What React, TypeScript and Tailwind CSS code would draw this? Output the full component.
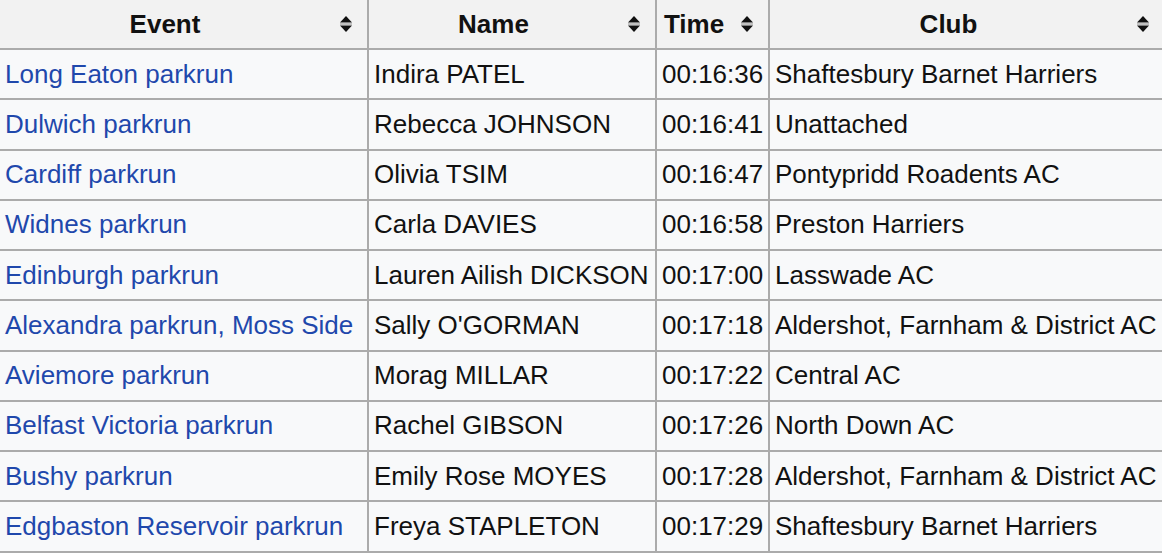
import React from "react";

type Row = { event: string; name: string; time: string; club: string };

const rows: Row[] = [
  { event: "Long Eaton parkrun", name: "Indira PATEL", time: "00:16:36", club: "Shaftesbury Barnet Harriers" },
  { event: "Dulwich parkrun", name: "Rebecca JOHNSON", time: "00:16:41", club: "Unattached" },
  { event: "Cardiff parkrun", name: "Olivia TSIM", time: "00:16:47", club: "Pontypridd Roadents AC" },
  { event: "Widnes parkrun", name: "Carla DAVIES", time: "00:16:58", club: "Preston Harriers" },
  { event: "Edinburgh parkrun", name: "Lauren Ailish DICKSON", time: "00:17:00", club: "Lasswade AC" },
  { event: "Alexandra parkrun, Moss Side", name: "Sally O'GORMAN", time: "00:17:18", club: "Aldershot, Farnham & District AC" },
  { event: "Aviemore parkrun", name: "Morag MILLAR", time: "00:17:22", club: "Central AC" },
  { event: "Belfast Victoria parkrun", name: "Rachel GIBSON", time: "00:17:26", club: "North Down AC" },
  { event: "Bushy parkrun", name: "Emily Rose MOYES", time: "00:17:28", club: "Aldershot, Farnham & District AC" },
  { event: "Edgbaston Reservoir parkrun", name: "Freya STAPLETON", time: "00:17:29", club: "Shaftesbury Barnet Harriers" },
];

function SortIcon() {
  return (
    <svg width="14" height="20" viewBox="0 0 14 20" className="shrink-0">
      <path d="M7 2 L13 8.6 L1 8.6 Z" fill="#111" />
      <rect x="1" y="9.2" width="12" height="1.6" fill="#b5b5b5" />
      <path d="M1 11.4 L13 11.4 L7 18 Z" fill="#111" />
    </svg>
  );
}

function Th({ label, first, last }: { label: string; first?: boolean; last?: boolean }) {
  return (
    <th
      className={`h-[49px] border-2 border-t-0 border-[#ababab] bg-[#f2f2f2] p-0 font-bold ${first ? "border-l-0" : ""} ${last ? "border-r-0" : ""}`}
    >
      <div className="flex items-center pl-[6px] pr-[14px]">
        <span className="flex-1 text-center pr-[15px]">{label}</span>
        <SortIcon />
      </div>
    </th>
  );
}

export default function App() {
  return (
    <div className="w-[1162px] h-[554px] overflow-hidden bg-white">
      <table
        className="w-[1164px] table-fixed border-collapse text-[26px] leading-[39px] text-[#111]"
        style={{ fontFamily: '"Liberation Sans", Arial, sans-serif' }}
      >
        <colgroup>
          <col className="w-[368px]" />
          <col className="w-[288px]" />
          <col className="w-[113px]" />
          <col className="w-[395px]" />
        </colgroup>
        <thead>
          <tr>
            <Th label="Event" first />
            <Th label="Name" />
            <Th label="Time" />
            <Th label="Club" last />
          </tr>
        </thead>
        <tbody>
          {rows.map((r) => (
            <tr key={r.event} className="h-[50.25px] bg-[#f8f9fa]">
              <td className="border-2 border-l-0 border-[#ababab] px-[5px] py-0 whitespace-nowrap text-[#1f48ac]">
                {r.event}
              </td>
              <td className="border-2 border-[#ababab] px-[5px] py-0 whitespace-nowrap">{r.name}</td>
              <td className="border-2 border-[#ababab] px-[5px] py-0 whitespace-nowrap">{r.time}</td>
              <td className="border-2 border-r-0 border-[#ababab] px-[5px] py-0 whitespace-nowrap">{r.club}</td>
            </tr>
          ))}
        </tbody>
      </table>
    </div>
  );
}
